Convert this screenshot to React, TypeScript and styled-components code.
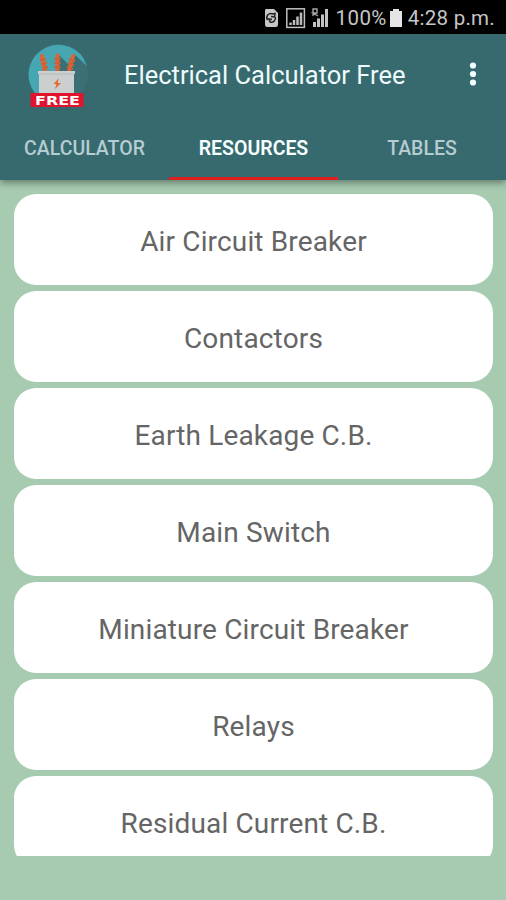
import React from "react";
import styled, { createGlobalStyle } from "styled-components";

const GlobalStyle = createGlobalStyle`
  * { box-sizing: border-box; }
  body { margin: 0; background: #a6cbb0; font-family: Roboto, "Liberation Sans", sans-serif; }
  button { font-family: inherit; border: 0; padding: 0; background: none; }
`;

const Screen = styled.div`
  width: 506px;
  height: 900px;
  display: flex;
  flex-direction: column;
  overflow: hidden;
  background: #a6cbb0;
`;

const StatusBar = styled.div`
  flex: none;
  height: 34px;
  padding: 1px 11px 0 0;
  display: flex;
  align-items: center;
  justify-content: flex-end;
  background: #000;
  color: #c6c6c6;
  font-size: 20.5px;
  line-height: 30px;
`;

const StatusIcons = styled.svg`
  width: 68px;
  height: 22px;
  margin-right: 4px;
`;

const Percent = styled.span`
  letter-spacing: 0.45px;
`;

const Battery = styled.svg`
  width: 12px;
  height: 18px;
  margin: 1px 6px 0 3px;
`;

const Clock = styled.span`
  letter-spacing: 0.25px;
`;

const Header = styled.header`
  flex: none;
  height: 146px;
  background: #376a6e;
  box-shadow: 0 3px 7px rgba(0, 0, 0, 0.38);
  z-index: 1;
`;

const Toolbar = styled.div`
  height: 81px;
  padding: 0 19px 0 26px;
  display: flex;
  align-items: center;
`;

const AppLogo = styled.svg`
  width: 64px;
  height: 66px;
  margin-top: 2px;
`;

const Title = styled.h1`
  flex: 1;
  margin: 0 0 0 34px;
  color: #eefafc;
  font-size: 25.5px;
  font-weight: 400;
  line-height: 34px;
  white-space: nowrap;
`;

const MenuButton = styled.button`
  width: 28px;
  height: 32px;
`;

const TabRow = styled.nav`
  height: 65px;
  display: grid;
  grid-template-columns: 169px 169px 168px;
`;

const Tab = styled.button<{ $active?: boolean }>`
  height: 65px;
  padding: 5px 0 0;
  border-bottom: 3px solid ${(p) => (p.$active ? "#de1f1d" : "transparent")};
  color: ${(p) => (p.$active ? "#f6ffff" : "#b6ccd3")};
  font-size: 19.5px;
  font-weight: ${(p) => (p.$active ? 600 : 500)};
`;

const List = styled.main`
  flex: none;
  height: 676px;
  padding: 14px 13px 0 14px;
  display: flex;
  flex-direction: column;
  gap: 6px;
  overflow: hidden;
`;

const Card = styled.button`
  flex: none;
  height: 91px;
  padding-top: 4px;
  border-radius: 22px;
  background: #fff;
  color: #656565;
  font-size: 28px;
  letter-spacing: 0.15px;
`;

const resources = [
  "Air Circuit Breaker",
  "Contactors",
  "Earth Leakage C.B.",
  "Main Switch",
  "Miniature Circuit Breaker",
  "Relays",
  "Residual Current C.B.",
];

const FreeLabel = styled.text`
  font: 700 13px "DejaVu Sans", sans-serif;
`;

function Logo() {
  return (
    <AppLogo viewBox="0 0 64 66">
      <circle cx="32" cy="31" r="30" fill="#3a7075" />
      <path d="M9 50.3A30 30 0 1 1 57.6 15.2L61 23L48 11L46 25L32 11V30H14V50.3Z" fill="#46a6b1" />
      <path d="M16 13L19 28M31.5 12.5V28M47 13L43 28" fill="none" stroke="#dd6434" strokeWidth="4" strokeLinecap="round" />
      <path d="M14 17l6-1M15 21l6-1M16 25l6-1M28.5 16h6M28.5 20h6M28.5 24h6M43 16l6 2M42 20l6 2M41 24l6 2" stroke="#cf6035" strokeWidth="2" />
      <path d="M12 28H49V31H48V51H13V31H12Z" fill="#cccfd0" />
      <path d="M13 31H48" stroke="#b5bbbc" strokeWidth="1" />
      <path d="M33 35L27.5 41H30.5L29 46L35 40H31.5Z" fill="#e8662c" />
      <rect x="4.5" y="50" width="53" height="14" fill="#e1142d" />
      <FreeLabel x="9" y="61.7" fill="#fff" textLength="45" lengthAdjust="spacingAndGlyphs">FREE</FreeLabel>
    </AppLogo>
  );
}

export default function App() {
  return (
    <>
      <GlobalStyle />
      <Screen>
        <StatusBar>
          <StatusIcons viewBox="0 0 68 22">
            <path d="M3 2H11L15 6V17Q15 20 13 20H4Q2 20 2 17V4Q2 2 3 2Z" fill="#c6c6c6" />
            <path d="M4.5 13A4.2 4.2 0 0 1 10 7L12 6.5L11.5 10L8 9.5M12.4 10A4.2 4.2 0 0 1 7 15L6 12L9 12.5" fill="none" stroke="#222" strokeWidth="1.5" />
            <rect x="23.8" y="1.8" width="17.6" height="18.6" fill="none" stroke="#c0c0c0" strokeWidth="1.5" />
            <path d="M27.5 18V15.5M31 18V13M34.5 18V9.5M38 18V5.5" stroke="#bdbdbd" strokeWidth="2.5" />
            <path d="M51.5 20V15M55.5 20V11.5M59.5 20V7.5M63.5 20V2" stroke="#c4c4c4" strokeWidth="3" />
            <path d="M50 9V2H54V6H50L55 9" fill="none" stroke="#a5a5a5" strokeWidth="1.4" />
          </StatusIcons>
          <Percent>100%</Percent>
          <Battery viewBox="0 0 12 18">
            <path d="M3 0H9V2H12V18H0V2H3Z" fill="#e5e5e5" />
          </Battery>
          <Clock>4:28 p.m.</Clock>
        </StatusBar>
        <Header>
          <Toolbar>
            <Logo />
            <Title>Electrical Calculator Free</Title>
            <MenuButton aria-label="More options">
              <svg width="28" height="32" viewBox="0 0 28 32" fill="#f4ffff">
                <circle cx="14" cy="6.5" r="3.1" />
                <circle cx="14" cy="15" r="3.1" />
                <circle cx="14" cy="23.5" r="3.1" />
              </svg>
            </MenuButton>
          </Toolbar>
          <TabRow>
            <Tab>CALCULATOR</Tab>
            <Tab $active>RESOURCES</Tab>
            <Tab>TABLES</Tab>
          </TabRow>
        </Header>
        <List>
          {resources.map((name) => (
            <Card key={name}>{name}</Card>
          ))}
        </List>
      </Screen>
    </>
  );
}
